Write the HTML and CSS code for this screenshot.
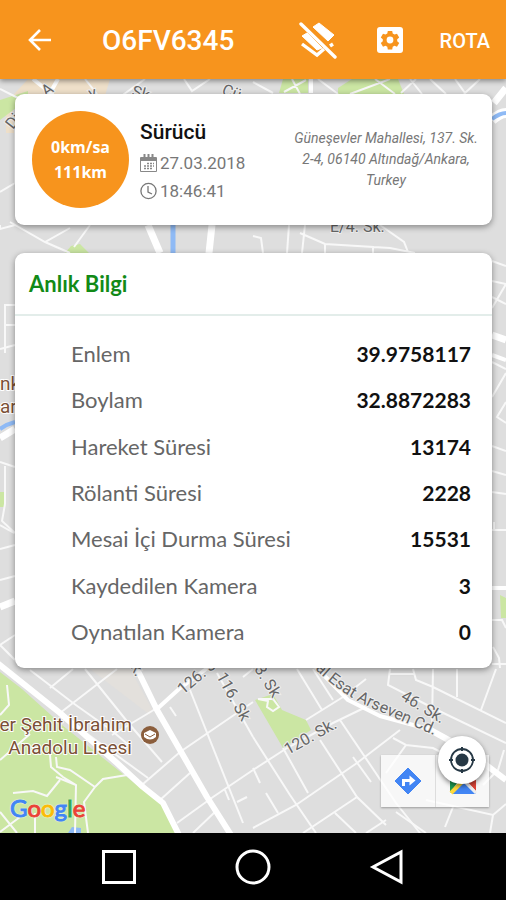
FILE: index.html
```html
<!DOCTYPE html>
<html lang="tr">
<head>
  <meta charset="UTF-8" />
  <meta name="viewport" content="width=device-width, initial-scale=1.0"/>
  <title>O6FV6345</title>
  <link rel="stylesheet" href="styles.css">
</head>
<body>

<header class="topbar">
  <button class="icon-btn" aria-label="Geri">
    <svg width="24" height="24" viewBox="0 0 24 24"><path d="M23 12H2M12 2L2 12l10 10" fill="none" stroke="#fff" stroke-width="2.600"/></svg>
  </button>
  <h1>O6FV6345</h1>
  <button class="icon-btn layers" aria-label="Katmanlar">
    <svg width="38" height="38" viewBox="0 0 38 38">
      <path d="M14 6l6-4 15 12-6 6zM3 15l5-3 15 15-5 2z" fill="#fff" stroke="#fff" stroke-linejoin="round"/>
      <path d="M3 23l15 11 7-6M31 25l3-2" fill="none" stroke="#fff" stroke-width="3.400"/>
      <path d="M4 1l33 32" stroke="#f7941d" stroke-width="2"/>
      <path d="M2 3l34 33" stroke="#fff" stroke-width="3.400" stroke-linecap="round"/>
    </svg>
  </button>
  <button class="icon-btn settings" aria-label="Ayarlar">
    <svg width="26" height="26" viewBox="0 0 26 26">
      <rect width="26" height="26" rx="3" fill="#fff"/>
      <path d="M10.800 4h4.400l.5 2.600 1.800 1 2.500-.9 2.200 3.800-2 1.700v2l2 1.700-2.200 3.800-2.500-.9-1.800 1-.5 2.600h-4.400l-.5-2.600-1.800-1-2.500.9-2.200-3.800 2-1.700v-2l-2-1.700L6 6.700l2.500.9 1.800-1z" fill="#f7941d"/>
      <circle cx="13" cy="13" r="3.400" fill="#fff"/>
    </svg>
  </button>
  <button class="route">ROTA</button>
</header>

<main>
  <svg class="map" viewBox="0 79 506 754" preserveAspectRatio="xMidYMax slice" aria-hidden="true">
    <rect y="79" width="506" height="754" fill="#dedede"/>
    <!-- built-up areas and parks -->
    <path d="M28 79h82l-6 20H12l2 34H6v-30z" fill="#eedfc9"/>
    <path d="M150 715l-60-46h40l22 40z" fill="#e3e0dc"/>
    <g fill="#cbe6a3">
      <path d="M0 100l28-9v8L0 120zM283 79h25v14h-29zM352 79h46l6 15h-66v-6zM65 253l6-7 9-2 9 9zM0 492h5v15H0zM500 595l6 3v20h-5z"/>
      <path d="M0 672l22 17 40 36 56 45 25 20 20 15 15 28H0z"/>
      <path d="M255 700l18-6 9 16 24 10 5 10-28 18z"/>
    </g>
    <path d="M68 833l4-6 9 1v5z" fill="#8fbaf5"/>
    <!-- side streets -->
    <g class="street">
      <path d="M0 89l28 14M85 79l12 15M145 79l-25 18M184 79l8 12 18-12M253 82l20 11M318 79l20 15M350 94l40-15M375 79l20 15M401 93l15-14M410 79l12 15M430 79l16 15M455 79l10 14M480 79l-16 15M292 79l8 15M284 92l22-12"/>
      <path d="M0 192l15-9v-60M15 225L0 229v-4M10 222l35 20 25-14M45 242l25 11M90 225l-16 22M289 225l-2 28M305 225l-3 28M253 236l8 2 2 15M300 233l25 11 65 4 25 5M380 225l24 17 4 10M325 244v10M373 246v9"/>
      <path d="M15 305H5v20h10M5 325v28M15 345L0 349M0 462l15 5M5 466v38l-3 17 13 12M15 545L0 549M0 580l15-4M15 635L0 645l15 15M0 525l14 8"/>
      <path d="M492 261l14 5M492 281l14 3-14 24M492 297l14 7M492 362l14 7M506 373l-14 24M506 402l-9 15 9 6M492 446l14 5M492 471l14 4M492 492l14 2M492 530h14M494 522v8M492 620h10l4 8M493 647l6 11 1 10M492 664h14"/>
      <path d="M30 670l43 33 38 27 20 17M73 669l-23 19M117 669l-57 44M85 669l45 56 32 37M157 708l-45 27M143 784l37-32 73-50M75 725l73 53M160 800l30-27M177 823l36-26 40-27M193 833l24-23M190 690l53 133M217 673l36 64M170 707l6 9M225 790l4 10M237 802l10-5"/>
      <path d="M7 685l2 20-9 10M0 760l30-26M50 755l1 12 12 10 13 8-1 48M56 757l1 10 13 3 25 17 8-8 24-4M13 793l20-2 14 5 13-16M76 785l-20-8M95 787l-11 15 4 31M0 812l17 21M35 833v-20M0 832l20-15"/>
      <path d="M253 770l34-22 46-25 33-16M253 737l37 58 26 38M283 748l25 45M320 740l37 57 29 28M253 828l43-23 61-42 43-33M303 833l54-36M340 720l56 83 24 30M306 720l37-23 23-18M297 669l25 41M313 669l20 31M353 757l18 25M335 813l21 20M253 768l7 15M266 793l12 20M366 833l20-13"/>
      <path d="M393 738l13 7 27 3 35 18M406 745l-20 28M390 669l-2 16 45 23 73 35M390 674h24M413 669l3 11 17 7 73 36M433 669l-1 56M457 669v28M496 669l-15 41M396 812l30 21M445 827l8-20M426 800l67 15 13-11M493 815l-3 18M504 750l-6 20-15 15M253 669l-10 8"/>
      <path d="M258 699l10 2-1 6 6 4 6-4-6-8z"/>
    </g>
    <!-- water -->
    <path d="M173 225v28" stroke="#8fbaf5" stroke-width="5"/>
    <path d="M492 120q8-7 14-7" fill="none" stroke="#fff" stroke-width="10"/>
    <path d="M492 119q8-6 14-6M0 429q7-5 15-7" fill="none" stroke="#8fbaf5" stroke-width="4"/>
    <!-- main roads -->
    <g class="road">
      <path d="M-4 662l64 51 57 50 26 24 20 16 16 32M137 669l20 41 23 40 27 47 24 38" stroke-width="6"/>
      <path d="M148 225l12 28M212 225l-3 28M494 103l12-15M0 438l15-9M0 607l15-6M492 335l14 5" stroke-width="7"/>
      <path d="M33 79l20 16M58 79l-8 14M311 79v14M157 709l22-20 34-25M313 664l35 36 32 16 48 13M492 588h14M492 355l14 5" stroke-width="4"/>
      <path d="M425 727l40 22 41 31" stroke-width="6"/>
    </g>
    <!-- street names -->
    <g class="street-name">
      <text transform="translate(13 130) rotate(-52)">Di</text>
      <text transform="translate(46 97) rotate(-35)">A</text>
      <text transform="translate(90 99) rotate(-15)">v.</text>
      <text transform="translate(131 96) rotate(15)">Sk.</text>
      <text transform="translate(221 94) rotate(20)">Çü</text>
      <text x="330" y="232">E/4. Sk.</text>
      <text transform="translate(183 695) rotate(-40)">126. Sk.</text>
      <text transform="translate(216 676) rotate(61)">116. Sk</text>
      <text transform="translate(254 669) rotate(58)">3. Sk</text>
      <text transform="translate(126 658) rotate(63)">Sk.</text>
      <text transform="translate(288 755) rotate(-29)">120. Sk.</text>
      <text transform="translate(400 699) rotate(31)">46. Sk.</text>
      <path id="arseven" d="M315 669Q340 694 374 709T436 736" fill="none" stroke="none"/>
      <text><textPath href="#arseven">al Esat Arseven Cd.</textPath></text>
    </g>
    <!-- places -->
    <g class="place">
      <text x="0" y="390">nk</text>
      <text x="0" y="413">ar</text>
      <text x="132" y="731" text-anchor="end">er Şehit İbrahim</text>
      <text x="132" y="754" text-anchor="end">Anadolu Lisesi</text>
    </g>
    <circle cx="150" cy="735" r="9" fill="#8b5e3c"/>
    <path d="M144 733l6-3 6 3v4q-6 5-12 0z" fill="#fff"/>
    <path d="M145 734l5 3 5-3" fill="none" stroke="#8b5e3c"/>
  </svg>

  <section class="card vehicle">
    <div class="speed"><span>0km/sa</span><span>111km</span></div>
    <div class="driver">
      <h2>Sürücü</h2>
      <p>
        <svg width="17" height="18" viewBox="0 0 17 18" fill="none" stroke="#888">
          <path d="M.5 3.500h16v14H.5zM.5 6.500h16"/>
          <path d="M1 5h15" stroke-width="2.400"/>
          <path d="M4.500 0v4M8.500 0v4M12.500 0v4" stroke-width="2"/>
          <path d="M7 9.500h7M4 12h10M4 14.500h9" stroke-width="1.600" stroke-dasharray="2 1"/>
        </svg>
        <span>27.03.2018</span>
      </p>
      <p>
        <svg width="17" height="18" viewBox="0 0 17 18" fill="none" stroke="#777" stroke-width="1.300">
          <circle cx="8.500" cy="9" r="7.600"/>
          <path d="M8 4v6l4 2"/>
        </svg>
        <span>18:46:41</span>
      </p>
    </div>
    <address>Güneşevler Mahallesi, 137. Sk. 2-4, 06140 Altındağ/Ankara, Turkey</address>
  </section>

  <section class="card info">
    <h2>Anlık Bilgi</h2>
    <div class="rows">
      <table>
        <tr><th scope="row">Enlem</th><td>39.9758117</td></tr>
        <tr><th scope="row">Boylam</th><td>32.8872283</td></tr>
        <tr><th scope="row">Hareket Süresi</th><td>13174</td></tr>
        <tr><th scope="row">Rölanti Süresi</th><td>2228</td></tr>
        <tr><th scope="row">Mesai İçi Durma Süresi</th><td>15531</td></tr>
        <tr><th scope="row">Kaydedilen Kamera</th><td>3</td></tr>
        <tr><th scope="row">Oynatılan Kamera</th><td>0</td></tr>
      </table>
    </div>
  </section>

  <div class="google"><span class="b">G</span><span class="r">o</span><span class="y">o</span><span class="b">g</span><span class="g">l</span><span class="r">e</span></div>

  <div class="map-tools">
    <button aria-label="Yol tarifi">
      <svg width="28" height="28" viewBox="0 0 28 28">
        <path d="M14 1l13 13-13 13L1 14z" fill="#4285f4" stroke="#4285f4" stroke-linejoin="round"/>
        <path d="M9.500 19v-5.500h7" fill="none" stroke="#fff" stroke-width="3"/>
        <path d="M15.500 8.500l6 5-6 5z" fill="#fff"/>
      </svg>
    </button>
    <button aria-label="Haritalarda aç">
      <svg width="28" height="28" viewBox="0 0 28 28">
        <path d="M1 1h26v26H1z" fill="#fff"/>
        <path d="M1 1h18L1 26z" fill="#1e9b50"/>
        <path d="M27 5v19L17 13z" fill="#dc4437"/>
        <path d="M14 14l13 13H3z" fill="#4285f4"/>
        <path d="M2 26l14-14" stroke="#ffd93b" stroke-width="4"/>
        <path d="M14 13l13 13" stroke="#eee" stroke-width="3"/>
      </svg>
    </button>
  </div>
  <button class="locate" aria-label="Konumum">
    <svg width="28" height="28" viewBox="0 0 28 28">
      <circle cx="14" cy="14" r="11" fill="none" stroke="#263845" stroke-width="1.800"/>
      <circle cx="14" cy="14" r="6.500" fill="#263845"/>
      <path d="M14 1v4M14 23v4M1 14h4M23 14h4" stroke="#263845" stroke-width="2"/>
    </svg>
  </button>
</main>

<nav class="softkeys">
  <button aria-label="Son uygulamalar">
    <svg width="36" height="36" viewBox="0 0 36 36"><path d="M2.500 2.500h31v31h-31z"/></svg>
  </button>
  <button aria-label="Ana ekran">
    <svg width="36" height="36" viewBox="0 0 36 36"><circle cx="18" cy="18" r="16"/></svg>
  </button>
  <button aria-label="Geri">
    <svg width="36" height="36" viewBox="0 0 36 36"><path d="M32 3v30L4 18z"/></svg>
  </button>
</nav>

</body>
</html>
```
FILE: styles.css
```css
* { box-sizing: border-box; }
body {
  margin: 0; min-height: 100vh; display: flex; flex-direction: column;
  font-family: Roboto, "Liberation Sans", sans-serif; color: #111; background: #000;
}
h1, h2, p { margin: 0; }
button { border: 0; padding: 0; background: none; font: inherit; color: inherit; cursor: pointer; }
svg { display: block; }

.topbar {
  position: relative; z-index: 1;
  display: flex; align-items: center; height: 79px; padding: 2px 16px 0 28px;
  background: #f7941d; color: #fff; box-shadow: 0 2px 5px rgba(0, 0, 0, .4);
}
.topbar h1 { flex: 1; margin-left: 50px; font-size: 28px; font-weight: 500; }
.layers { margin-right: 40px; }
.settings { margin-right: 37px; }
.icon-btn svg { margin-top: -2px; }
.route { font-size: 20px; font-weight: 500; }

main { position: relative; flex: 1; padding: 15px 14px 165px 15px; }
.map { position: absolute; inset: 0; width: 100%; height: 100%; }
.street { fill: none; stroke: #f8f8f8; stroke-width: 2; }
.road { fill: none; stroke: #fff; stroke-linejoin: round; }
.street-name { font-size: 16px; fill: #666; }
.street-name text, .place { stroke: #eee; stroke-width: 2px; paint-order: stroke; }
.place { font-size: 19px; fill: #7b5036; stroke: #fff; }

.card {
  position: relative; background: #fff; border-radius: 9px;
  box-shadow: 0 2px 6px rgba(0, 0, 0, .4);
}
.vehicle { display: flex; align-items: center; padding: 17px 11px 17px 17px; margin-bottom: 28px; }
.speed {
  width: 97px; height: 97px; border-radius: 50%; background: #f7941d; color: #fff;
  display: flex; flex-direction: column; align-items: center; justify-content: center;
  font: bold 16px/25px "Open Sans", sans-serif;
}
.driver { margin-left: 11px; color: #777; }
.driver h2 { font-size: 21px; line-height: 34px; font-weight: 500; color: #111; }
.driver p { display: flex; align-items: center; gap: 3px; font-size: 17px; line-height: 28px; }
.vehicle address {
  flex: 1; max-width: 190px; margin-left: auto;
  font-size: 14px; line-height: 21px; text-align: center; color: #777;
}

.info { font-family: Lato, sans-serif; }
.info h2 {
  padding: 1px 14px 0; line-height: 60px; font-size: 22px; color: #128a17;
  border-bottom: 2px solid #e3edea;
}
.rows { padding: 14px 0 13px; }
.rows table { width: 100%; height: 325px; border-spacing: 0; }
.rows th { padding: 0 0 0 56px; text-align: left; font-size: 22px; font-weight: 400; color: #666; }
.rows td { padding: 0 21px 0 0; text-align: right; font-size: 21px; font-weight: 700; color: #111; }

.google {
  position: absolute; left: 10px; bottom: 9px;
  font: 24px/32px Lato, sans-serif; -webkit-text-stroke: 1px; text-shadow: 0 0 2px #fff, 0 0 2px #fff;
}
.b { color: #4285f4; }
.r { color: #ea4335; }
.y { color: #fbbc05; }
.g { color: #34a853; }

.map-tools {
  position: absolute; right: 17px; bottom: 26px; display: flex;
  background: rgba(255, 255, 255, .75); box-shadow: 0 1px 2px rgba(0, 0, 0, .3);
}
.map-tools button { width: 54px; height: 52px; display: grid; place-items: center; }
.map-tools button + button { border-left: 1px solid #ddd; }
.locate {
  position: absolute; right: 20px; bottom: 49px; width: 48px; height: 48px;
  display: grid; place-items: center; background: #fff; border-radius: 50%;
  box-shadow: 0 2px 5px rgba(0, 0, 0, .5);
}

.softkeys { display: flex; justify-content: center; height: 67px; background: #000; }
.softkeys button { width: 134px; display: grid; place-items: center; }
.softkeys svg { fill: none; stroke: #fff; stroke-width: 3; }
```
